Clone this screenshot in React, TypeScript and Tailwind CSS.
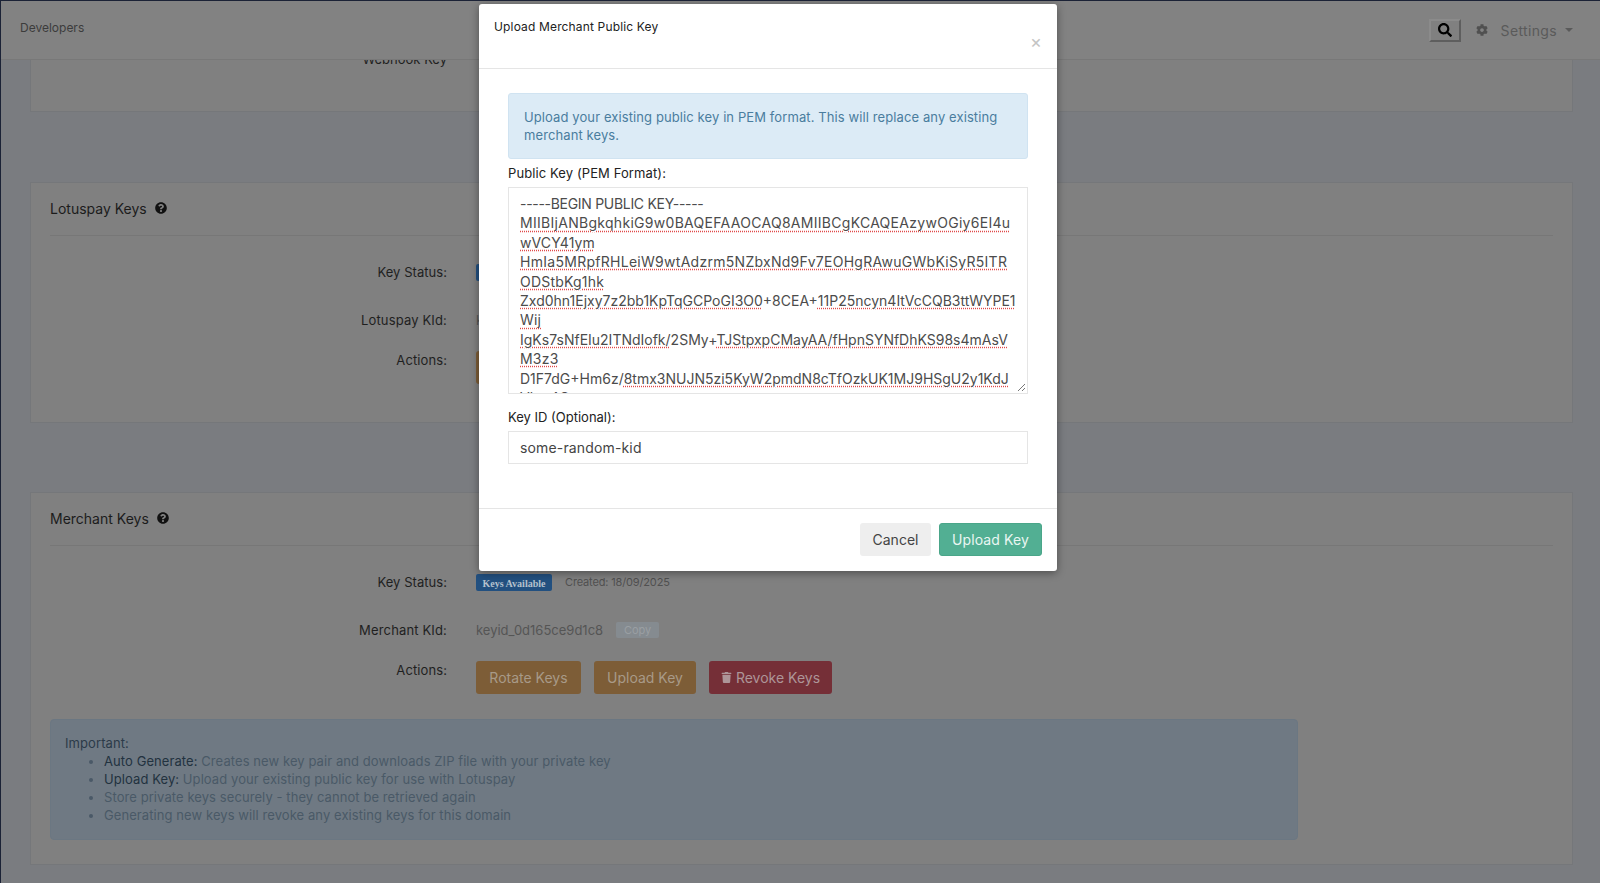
import { FaCog, FaQuestionCircle, FaTrash, FaSearch } from "react-icons/fa";

// each line: its tracking class, then text runs with a spell-check flag
const keyLines: { tracking: string; runs: [string, boolean][] }[] = [
  { tracking: "tracking-[-0.3px]", runs: [["-----BEGIN PUBLIC KEY-----", false]] },
  { tracking: "tracking-[0.29px]", runs: [["MIIBIjANBgkqhkiG9w0BAQEFAAOCAQ8AMIIBCgKCAQEAzywOGiy6EI4u", true]] },
  { tracking: "tracking-[0.1px]", runs: [["wVCY41ym", true]] },
  { tracking: "tracking-[0.28px]", runs: [["HmIa5MRpfRHLeiW9wtAdzrm5NZbxNd9Fv7EOHgRAwuGWbKiSyR5ITR", true]] },
  { tracking: "tracking-[0.2px]", runs: [["ODStbKg1hk", true]] },
  { tracking: "tracking-[0px]", runs: [["Zxd0hn1Ejxy7z2bb1KpTqGCPoGI3O0", true], ["+8CEA+", false], ["11P25ncyn4ItVcCQB3ttWYPE1", true]] },
  { tracking: "tracking-[0.2px]", runs: [["Wij", true]] },
  { tracking: "tracking-[0px]", runs: [["IgKs7sNfEIu2ITNdIofk/", true], ["2SMy+", false], ["TJStpxpCMayAA/fHpnSYNfDhKS98s4mAsV", true]] },
  { tracking: "tracking-[0.2px]", runs: [["M3z3", true]] },
  { tracking: "tracking-[0px]", runs: [["D1F7dG+Hm6z/", false], ["8tmx3NUJN5zi5KyW2pmdN8cTfOzkUK1MJ9HSgU2y1KdJ", true]] },
  { tracking: "tracking-[0.2px]", runs: [["Vlpz4Q", true]] },
];

function KeyCard({ title, kidLabel, kid, children }: { title: string; kidLabel: string; kid: string; children?: React.ReactNode }) {
  return (
    <section className="h-full bg-[#808080] border border-[#75777a] px-[19px]">
      {/* Card header */}
      <div className="h-[53px] border-b border-[#777777] flex items-center gap-[8px] pb-[2px]">
        <h3 className="text-[14px] text-[#1c1c1c]">{title}</h3>
        <FaQuestionCircle className="text-[12px] text-[#111111]" />
      </div>
      <div className="flex items-start mt-[28px] h-[17px]">
        <div className="w-[397px] text-right text-[13px] leading-[16px] tracking-[0.05px] text-[#1f1f1f]">Key Status:</div>
        <div className="ml-[29px] flex items-center">
          <span className="h-[17px] w-[76px] flex items-center justify-center pt-[1px] rounded-[2px] bg-[#225080] text-[10px] font-bold text-[#b4c1cd] font-['Liberation_Serif',serif]">Keys Available</span>
          <span className="ml-[13px] text-[11px] tracking-[-0.15px] text-[#505050]">Created: 18/09/2025</span>
        </div>
      </div>
      <div className="flex items-start mt-[31px] h-[17px]">
        <div className="w-[397px] text-right text-[13px] leading-[16px] tracking-[0.15px] text-[#1f1f1f]">{kidLabel}</div>
        <div className="ml-[29px] flex items-center">
          <span className="text-[13px] leading-[16px] text-[#555555]">{kid}</span>
          <span className="ml-[13px] h-[16px] w-[43px] flex items-center justify-center rounded-[2px] bg-[#858b90] text-[11px] text-[#9a9fa3]">Copy</span>
        </div>
      </div>
      <div className="flex items-start mt-[22px]">
        <div className="w-[397px] pt-[1px] text-right text-[13px] leading-[16px] tracking-[0.1px] text-[#1f1f1f]">Actions:</div>
        <div className="ml-[29px] flex gap-[13px] text-[14px] text-[#a89a88]">
          <span className="h-[33px] w-[105px] flex items-center justify-center rounded-[3px] bg-[#7d5d37]">Rotate Keys</span>
          <span className="h-[33px] w-[102px] flex items-center justify-center rounded-[3px] bg-[#7d5d37]">Upload Key</span>
          <span className="h-[33px] w-[123px] flex items-center justify-center gap-[4px] rounded-[3px] bg-[#752f37] text-[#ad9598]">
            <FaTrash className="text-[11px]" />
            Revoke Keys
          </span>
        </div>
      </div>
      {children}
    </section>
  );
}

export default function App() {
  return (
    <div className="relative h-[883px] overflow-hidden bg-[#7a7c80] border-l border-t border-[#1b2236] font-['Inter',sans-serif]">
      {/* Top bar, page scrolled under it */}
      <nav className="absolute top-0 left-0 right-0 z-10 h-[59px] bg-[#828282] border-b border-[#787878] flex items-center pl-[19px] pr-[27px]">
        <span className="text-[12px] text-[#3c3c3c] -mt-[4px]">Developers</span>
        <div className="ml-auto flex items-center">
          <button className="h-[23px] w-[32px] flex items-center justify-center border-2 border-t-[#8b8b8b] border-l-[#8b8b8b] border-r-[#5e5e5e] border-b-[#5e5e5e] bg-[#808080] text-black">
            <FaSearch className="text-[14px]" />
          </button>
          <FaCog className="ml-[15px] text-[12px] text-[#505050]" />
          <span className="ml-[13px] text-[14px] tracking-[0.35px] text-[#5a5a5a]">Settings</span>
          <span className="ml-[8px] w-0 h-0 border-x-[4px] border-x-transparent border-t-[4px] border-t-[#5a5a5a]" />
        </div>
      </nav>

      <main className="pl-[29px] pr-[27px]">
        <section className="h-[111px] bg-[#808080] border-b border-x border-[#75777a] pt-[50px] px-[19px]">
          <div className="w-[397px] text-right text-[13px] leading-[16px] text-[#1f1f1f]">Webhook Key</div>
        </section>
        <div className="mt-[70px] h-[241px]">
          <KeyCard title="Lotuspay Keys" kidLabel="Lotuspay KId:" kid="keyid_5c1ad07f2b34" />
        </div>
        <div className="mt-[69px]">
          <KeyCard title="Merchant Keys" kidLabel="Merchant KId:" kid="keyid_0d165ce9d1c8">
            <div className="mt-[25px] mb-[24px] w-[1248px] h-[121px] rounded-[4px] bg-[#6f7983] border border-[#6b7782] pl-[14px] pt-[14px] text-[13px] leading-[18px] tracking-[0.08px] text-[#4a5967]">
              <div className="text-[#2c3b49]">Important:</div>
              <ul className="list-disc pl-[39px]">
                <li><b className="font-normal text-[#22323f]">Auto Generate:</b> Creates new key pair and downloads ZIP file with your private key</li>
                <li><b className="font-normal text-[#22323f]">Upload Key:</b> Upload your existing public key for use with Lotuspay</li>
                <li>Store private keys securely - they cannot be retrieved again</li>
                <li>Generating new keys will revoke any existing keys for this domain</li>
              </ul>
            </div>
          </KeyCard>
        </div>
      </main>

      {/* Upload dialog */}
      <div className="absolute z-20 left-[478px] top-[3px] w-[578px] h-[567px] bg-white rounded-[3px] shadow-[0_2px_8px_rgba(0,0,0,0.4)] flex flex-col">
        <header className="relative h-[65px] shrink-0 border-b border-[#e5e5e5] pl-[15px] pt-[15px]">
          <h2 className="text-[12px] leading-[16px] tracking-[0.15px] text-[#222222]">Upload Merchant Public Key</h2>
          <span className="absolute right-[15px] top-[30px] text-[18px] leading-[16px] text-[#c4c4c4]">×</span>
        </header>
        <div className="flex-1 px-[29px] pt-[24px]">
          <div className="h-[66px] rounded-[3px] bg-[#dcebf6] border border-[#d0e3f1] px-[15px] pt-[14px] text-[13px] leading-[18px] tracking-[0.1px] text-[#4a7d9e]">
            Upload your existing public key in PEM format. This will replace any existing merchant keys.
          </div>
          <label className="block mt-[5px] text-[13px] leading-[18px] tracking-[0.1px] text-[#222222]">Public Key (PEM Format):</label>
          <div className="relative mt-[5px] h-[207px] border border-[#e5e5e5] overflow-hidden pl-[11px] pt-[6px] text-[14px] leading-[19.4px] text-[#4c4c4c]">
            {keyLines.map((line, i) => (
              <div key={i} className={`whitespace-nowrap ${line.tracking}`}>
                {line.runs.map(([text, flagged], j) => (
                  <span key={j} className={flagged ? "underline decoration-dotted decoration-[#e04a4a] underline-offset-2" : ""}>{text}</span>
                ))}
              </div>
            ))}
            <svg className="absolute right-[1px] bottom-[1px] bg-white" width="10" height="10" viewBox="0 0 10 10">
              <path d="M9 2 2 9M9 6 6 9" stroke="#777777" strokeWidth="1" fill="none" />
            </svg>
          </div>
          <label className="block mt-[14px] text-[13px] leading-[18px] text-[#222222]">Key ID (Optional):</label>
          <div className="mt-[5px] h-[33px] border border-[#e5e5e5] flex items-center pl-[11px] text-[14px] tracking-[0.15px] text-[#444444]">some-random-kid</div>
        </div>
        <footer className="h-[63px] shrink-0 border-t border-[#e5e5e5] flex items-start justify-end gap-[8px] pt-[14px] pr-[15px]">
          <button className="h-[33px] w-[71px] rounded-[3px] bg-[#eeeeee] text-[14px] text-[#444444]">Cancel</button>
          <button className="h-[33px] w-[103px] rounded-[3px] bg-[#52af93] border border-[#4aa689] text-[14px] tracking-[0.1px] text-[#e9f6f2]">Upload Key</button>
        </footer>
      </div>
    </div>
  );
}
